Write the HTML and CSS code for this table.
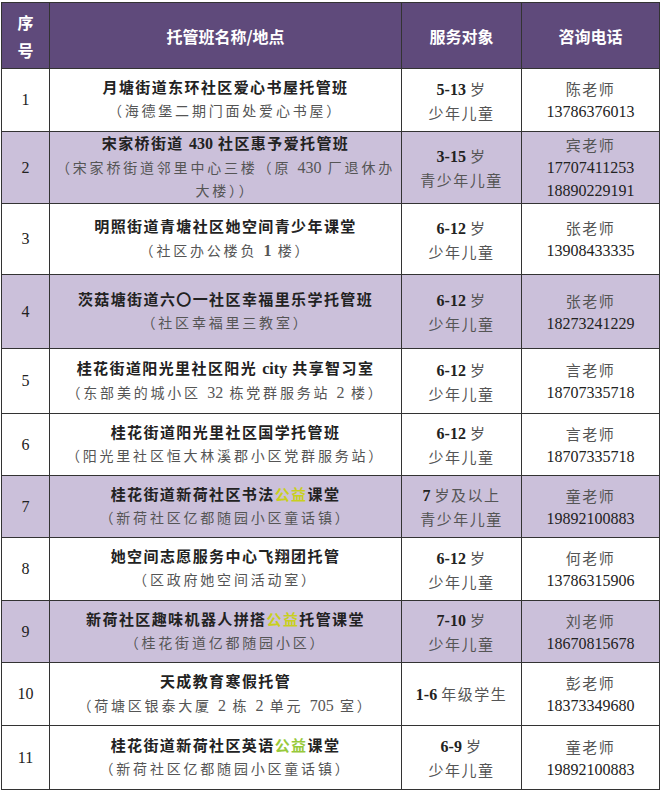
FILE: index.html
```html
<!DOCTYPE html>
<html lang="zh-CN">
<head>
<meta charset="utf-8">
<title>托管班</title>
<link rel="stylesheet" href="styles.css">
</head>
<body>
<table class="grid">
  <colgroup>
    <col class="c-no">
    <col class="c-name">
    <col class="c-age">
    <col class="c-tel">
  </colgroup>
  <thead>
    <tr class="head">
      <th class="no-h">序<br>号</th>
      <th>托管班名称/地点</th>
      <th>服务对象</th>
      <th>咨询电话</th>
    </tr>
  </thead>
  <tbody>
    <tr>
      <td class="no">1</td>
      <td class="name"><div class="main">月塘街道东环社区爱心书屋托管班</div><div class="sub">（海德堡二期门面处爱心书屋）</div></td>
      <td class="age"><div class="num">5-13 <span class="g">岁</span></div><div class="g">少年儿童</div></td>
      <td class="tel"><div class="g">陈老师</div><div class="ph">13786376013</div></td>
    </tr>
    <tr class="shade">
      <td class="no">2</td>
      <td class="name"><div class="main">宋家桥街道 <b class="d">430</b> 社区惠予爱托管班</div><div class="sub">（宋家桥街道邻里中心三楼（原 <span class="d">430</span> 厂退休办<br>大楼））</div></td>
      <td class="age"><div class="num">3-15 <span class="g">岁</span></div><div class="g">青少年儿童</div></td>
      <td class="tel"><div class="g">宾老师</div><div class="ph">17707411253</div><div class="ph">18890229191</div></td>
    </tr>
    <tr>
      <td class="no">3</td>
      <td class="name"><div class="main">明照街道青塘社区她空间青少年课堂</div><div class="sub">（社区办公楼负 <b class="d">1</b> 楼）</div></td>
      <td class="age"><div class="num">6-12 <span class="g">岁</span></div><div class="g">少年儿童</div></td>
      <td class="tel"><div class="g">张老师</div><div class="ph">13908433335</div></td>
    </tr>
    <tr class="shade">
      <td class="no">4</td>
      <td class="name"><div class="main">茨菇塘街道六〇一社区幸福里乐学托管班</div><div class="sub">（社区幸福里三教室）</div></td>
      <td class="age"><div class="num">6-12 <span class="g">岁</span></div><div class="g">少年儿童</div></td>
      <td class="tel"><div class="g">张老师</div><div class="ph">18273241229</div></td>
    </tr>
    <tr>
      <td class="no">5</td>
      <td class="name"><div class="main">桂花街道阳光里社区阳光 <b class="d">city</b> 共享智习室</div><div class="sub">（东部美的城小区 <span class="d">32</span> 栋党群服务站 <span class="d">2</span> 楼）</div></td>
      <td class="age"><div class="num">6-12 <span class="g">岁</span></div><div class="g">少年儿童</div></td>
      <td class="tel"><div class="g">言老师</div><div class="ph">18707335718</div></td>
    </tr>
    <tr>
      <td class="no">6</td>
      <td class="name"><div class="main">桂花街道阳光里社区国学托管班</div><div class="sub">（阳光里社区恒大林溪郡小区党群服务站）</div></td>
      <td class="age"><div class="num">6-12 <span class="g">岁</span></div><div class="g">少年儿童</div></td>
      <td class="tel"><div class="g">言老师</div><div class="ph">18707335718</div></td>
    </tr>
    <tr class="shade">
      <td class="no">7</td>
      <td class="name"><div class="main">桂花街道新荷社区书法<span class="hl">公益</span>课堂</div><div class="sub">（新荷社区亿都随园小区童话镇）</div></td>
      <td class="age"><div class="num">7 <span class="g">岁及以上</span></div><div class="g">青少年儿童</div></td>
      <td class="tel"><div class="g">童老师</div><div class="ph">19892100883</div></td>
    </tr>
    <tr>
      <td class="no">8</td>
      <td class="name"><div class="main">她空间志愿服务中心飞翔团托管</div><div class="sub">（区政府她空间活动室）</div></td>
      <td class="age"><div class="num">6-12 <span class="g">岁</span></div><div class="g">少年儿童</div></td>
      <td class="tel"><div class="g">何老师</div><div class="ph">13786315906</div></td>
    </tr>
    <tr class="shade">
      <td class="no">9</td>
      <td class="name"><div class="main">新荷社区趣味机器人拼搭<span class="hl">公益</span>托管课堂</div><div class="sub">（桂花街道亿都随园小区）</div></td>
      <td class="age"><div class="num">7-10 <span class="g">岁</span></div><div class="g">少年儿童</div></td>
      <td class="tel"><div class="g">刘老师</div><div class="ph">18670815678</div></td>
    </tr>
    <tr>
      <td class="no">10</td>
      <td class="name"><div class="main">天成教育寒假托管</div><div class="sub">（荷塘区银泰大厦 <span class="d">2</span> 栋 <span class="d">2</span> 单元 <span class="d">705</span> 室）</div></td>
      <td class="age"><div class="num">1-6 <span class="g">年级学生</span></div></td>
      <td class="tel"><div class="g">彭老师</div><div class="ph">18373349680</div></td>
    </tr>
    <tr>
      <td class="no">11</td>
      <td class="name"><div class="main">桂花街道新荷社区英语<span class="hl hl2">公益</span>课堂</div><div class="sub">（新荷社区亿都随园小区童话镇）</div></td>
      <td class="age"><div class="num">6-9 <span class="g">岁</span></div><div class="g">少年儿童</div></td>
      <td class="tel"><div class="g">童老师</div><div class="ph">19892100883</div></td>
    </tr>
  </tbody>
</table>
</body>
</html>
```

FILE: styles.css
```css
html, body {
  margin: 0;
  padding: 0;
  background: #ffffff;
}

body {
  padding: 2px 0 0 1px;
  font-family: "Liberation Serif", "Noto Sans CJK SC", serif;
  color: #222222;
}

.grid {
  border-collapse: collapse;
  table-layout: fixed;
  width: 658px;
}

.c-no { width: 48px; }
.c-name { width: 352px; }
.c-age { width: 120px; }
.c-tel { width: 138px; }

.grid th,
.grid td {
  border: 1px solid #333333;
  padding: 0;
  text-align: center;
  vertical-align: middle;
}

.head {
  height: 66px;
  background: #5f4a7b;
}

.head th {
  color: #ffffff;
  font-family: "Noto Sans CJK SC", sans-serif;
  font-weight: 700;
  font-size: 16px;
  line-height: 22px;
}

.head .no-h {
  line-height: 28px;
}

.shade td {
  background: #cbc0da;
}

tbody tr:nth-child(1) { height: 63px; }
tbody tr:nth-child(2) { height: 72px; }
tbody tr:nth-child(3) { height: 71px; }
tbody tr:nth-child(4) { height: 74px; }
tbody tr:nth-child(5) { height: 65px; }
tbody tr:nth-child(6) { height: 62px; }
tbody tr:nth-child(7) { height: 62px; }
tbody tr:nth-child(8) { height: 63px; }
tbody tr:nth-child(9) { height: 62px; }
tbody tr:nth-child(10) { height: 63px; }
tbody tr:nth-child(11) { height: 64px; }

.no {
  font-size: 16px;
  color: #222222;
}

.name {
  line-height: 23px;
}

.main {
  font-size: 15px;
  font-weight: 700;
  letter-spacing: 1.4px;
  color: #222222;
}

.main b {
  font-weight: 700;
}

.sub {
  font-size: 14px;
  letter-spacing: 2.8px;
  color: #555555;
}

.d {
  letter-spacing: 0;
  font-size: 16px;
}

.age,
.tel {
  line-height: 23px;
  font-size: 15px;
}

.num {
  font-weight: 700;
  font-size: 16px;
  color: #222222;
}

.num .g {
  font-weight: 400;
}

.g {
  color: #555555;
  font-size: 15px;
  letter-spacing: 1.5px;
  font-family: "Noto Sans CJK SC", sans-serif;
}

.ph {
  font-size: 16px;
  color: #222222;
}

.hl {
  color: #c9cf1e;
}

.hl2 {
  color: #97c93a;
}
```
